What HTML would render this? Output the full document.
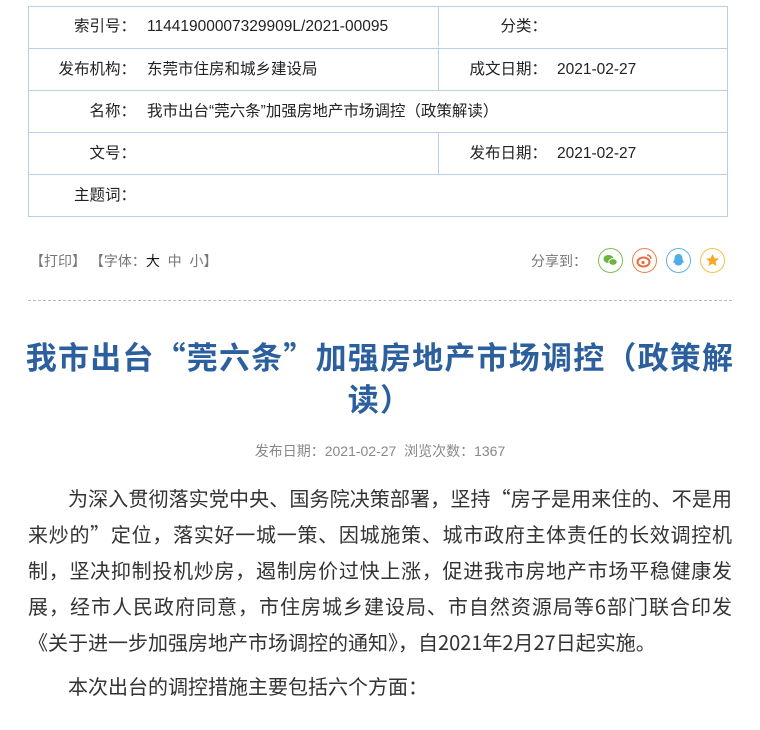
<!DOCTYPE html>
<html><head><meta charset="utf-8"><style>
body{margin:0;background:#fff;font-family:"Liberation Sans","Noto Sans CJK SC",sans-serif;color:#333;}
.t{position:absolute;left:28px;top:6px;width:698px;height:209px;border:1px solid #b8d0e6;}
.r{position:absolute;left:0;width:698px;height:41px;border-top:1px solid #b8d0e6;}
.lb,.v,.lb2,.v2{position:absolute;top:0;line-height:41px;font-size:15.5px;color:#222;white-space:nowrap}
.lb{right:591px;text-align:right}
.v{left:118px}
.lb2{right:180px}
.v2{left:528px}
.vs{position:absolute;left:409px;top:0;height:41px;border-left:1px solid #b8d0e6}
.ic{position:absolute;top:248px;width:23px;height:23px;border-radius:50%;border:1.5px solid}
p{margin:0}
</style></head><body>
<div class="t">
 <div class="r" style="top:-1px;border-top:none"><span class="lb">索引号：</span><span class="v">11441900007329909L/2021-00095</span><div class="vs"></div><span class="lb2">分类：</span></div>
 <div class="r" style="top:41px"><span class="lb">发布机构：</span><span class="v">东莞市住房和城乡建设局</span><div class="vs"></div><span class="lb2">成文日期：</span><span class="v2">2021-02-27</span></div>
 <div class="r" style="top:83px"><span class="lb">名称：</span><span class="v">我市出台“莞六条”加强房地产市场调控（政策解读）</span></div>
 <div class="r" style="top:125px"><span class="lb">文号：</span><div class="vs"></div><span class="lb2">发布日期：</span><span class="v2">2021-02-27</span></div>
 <div class="r" style="top:167px"><span class="lb">主题词：</span></div>
</div>
<div style="position:absolute;left:30px;top:251px;font-size:14px;color:#777;line-height:20px">【打印】 【字体：<span style="color:#111">大</span>&nbsp; 中&nbsp; 小】</div>
<div style="position:absolute;left:531px;top:251px;font-size:14px;color:#777;line-height:20px">分享到：</div>
<div class="ic" style="left:598px;border-color:#7cc04f"><svg width="23" height="23" viewBox="0 0 23 23"><ellipse cx="9.5" cy="10" rx="5" ry="4" fill="#6cb33f"/><ellipse cx="14" cy="13" rx="4.2" ry="3.4" fill="#6cb33f" stroke="#fff" stroke-width="1"/></svg></div>
<div class="ic" style="left:632px;border-color:#f27f4c"><svg width="23" height="23" viewBox="0 0 23 23"><ellipse cx="10.5" cy="13" rx="6" ry="4.5" fill="none" stroke="#ef6a3a" stroke-width="2"/><circle cx="10" cy="13.5" r="1.6" fill="#ef6a3a"/><path d="M14 6a4 4 0 0 1 4 4" stroke="#ef6a3a" stroke-width="1.5" fill="none"/></svg></div>
<div class="ic" style="left:666px;border-color:#5fb4e6"><svg width="23" height="23" viewBox="0 0 23 23"><path d="M11.5 5c3 0 4 2.5 4 5l1.5 4-1.5-.5c-.5 2-2 3-4 3s-3.5-1-4-3L6 14l1.5-4c0-2.5 1-5 4-5z" fill="#4eaee6"/></svg></div>
<div class="ic" style="left:700px;border-color:#f6c04a"><svg width="23" height="23" viewBox="0 0 23 23"><path d="M11.5 5l1.9 4.2 4.5.4-3.4 3 1 4.4-4-2.4-4 2.4 1-4.4-3.4-3 4.5-.4z" fill="#f5a623"/></svg></div>
<div style="position:absolute;left:28px;top:300px;width:704px;border-top:1px dashed #bbb"></div>
<div style="position:absolute;left:24px;top:335px;width:712px;text-align:center;font-size:31px;letter-spacing:1.2px;font-weight:bold;color:#2b5f9e;line-height:42px;font-family:'Noto Sans CJK SC',sans-serif">我市出台“莞六条”加强房地产市场调控（政策解读）</div>
<div style="position:absolute;left:0;top:441px;width:760px;text-align:center;font-size:14px;color:#888;line-height:20px">发布日期：2021-02-27&nbsp; 浏览次数：1367</div>
<div style="position:absolute;left:28px;top:480px;width:704px;font-size:20px;line-height:36px;color:#333;text-align:justify;font-family:'Noto Sans CJK SC',sans-serif">
<p style="text-indent:2em">为深入贯彻落实党中央、国务院决策部署，坚持“房子是用来住的、不是用来炒的”定位，落实好一城一策、因城施策、城市政府主体责任的长效调控机制，坚决抑制投机炒房，遏制房价过快上涨，促进我市房地产市场平稳健康发展，经市人民政府同意，市住房城乡建设局、市自然资源局等6部门联合印发《关于进一步加强房地产市场调控的通知》，自2021年2月27日起实施。</p>
<p style="text-indent:2em;margin-top:8px">本次出台的调控措施主要包括六个方面：</p>
</div>
</body></html>
